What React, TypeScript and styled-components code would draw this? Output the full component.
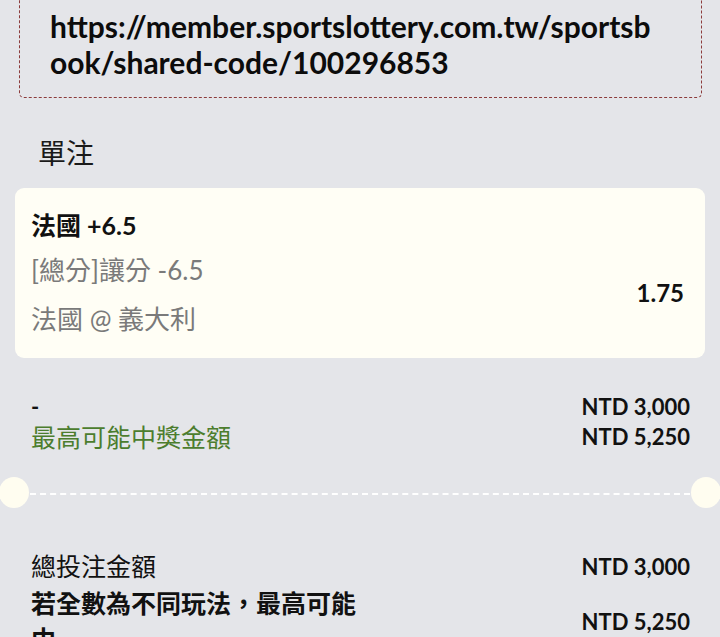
import { FC } from "react";
import styled, { createGlobalStyle } from "styled-components";

const GlobalStyle = createGlobalStyle`
  html, body {
    margin: 0;
    padding: 0;
    background: #e4e5e9;
    overflow: hidden;
  }
  body {
    font-family: Lato, "Noto Sans CJK TC", sans-serif;
    color: #111;
  }
`;

type Bet = {
  title: string;
  market: string;
  match: string;
  odds: string;
};

const bet: Bet = {
  title: "法國 +6.5",
  market: "[總分]讓分 -6.5",
  match: "法國 @ 義大利",
  odds: "1.75",
};

const App: FC = () => {
  return (
    <Page>
      <GlobalStyle />
      <LinkBox>https://member.sportslottery.com.tw/sportsbook/shared-code/100296853</LinkBox>
      <SectionTitle>單注</SectionTitle>
      <Card>
        <BetTitle>{bet.title}</BetTitle>
        <BetInfo>{bet.market}</BetInfo>
        <BetInfo $last>{bet.match}</BetInfo>
        <Odds>{bet.odds}</Odds>
      </Card>
      <Summary>
        <Label>-</Label>
        <Amount>NTD 3,000</Amount>
        <Label $green>最高可能中獎金額</Label>
        <Amount>NTD 5,250</Amount>
      </Summary>
      <Divider>
        <Hole $side="left" />
        <DashLine />
        <Hole $side="right" />
      </Divider>
      <Totals>
        <TotalLabel>總投注金額</TotalLabel>
        <TotalAmount>NTD 3,000</TotalAmount>
        <TotalLabel $bold>若全數為不同玩法，最高可能中</TotalLabel>
        <TotalAmount>NTD 5,250</TotalAmount>
      </Totals>
    </Page>
  );
};

export default App;

const Page = styled.div`
  display: flex;
  flex-direction: column;

  & > * {
    flex-shrink: 0;
  }
`;

const LinkBox = styled.div`
  margin: -12px 18px 0 19px;
  padding: 20px 38px 17px 30px;
  border: 1px dashed #8b3b3b;
  border-top: none;
  border-radius: 0 0 5px 5px;
  font-size: 30px;
  font-weight: 700;
  line-height: 36px;
  word-break: break-all;
  color: #0c0c0c;
`;

const SectionTitle = styled.div`
  margin: 38px 0 0 38px;
  font-size: 28px;
  line-height: 34px;
  color: #1a1a1a;
`;

const Card = styled.div`
  margin: 18px 15px 0 15px;
  height: 170px;
  box-sizing: border-box;
  padding: 20px 21px 0 16px;
  background: #fffef5;
  border-radius: 9px;
  display: grid;
  grid-template-columns: 1fr auto;
  grid-template-rows: 32px 44px 52px;
  align-items: center;
`;

const BetTitle = styled.div`
  grid-column: 1;
  font-size: 25px;
  font-weight: 700;
  color: #111;
`;

const BetInfo = styled.div<{ $last?: boolean }>`
  grid-column: 1;
  font-size: 26px;
  font-weight: 400;
  color: #7a7a7a;
  align-self: ${(p) => (p.$last ? "end" : "center")};
  margin-top: ${(p) => (p.$last ? "0" : "12px")};
`;

const Odds = styled.div`
  grid-column: 2;
  grid-row: 2 / 4;
  font-size: 24px;
  font-weight: 700;
  color: #111;
  margin-top: 8px;
`;

const Summary = styled.div`
  margin: 34px 30px 0 31px;
  display: grid;
  grid-template-columns: 1fr auto;
  line-height: 30px;
`;

const Label = styled.div<{ $green?: boolean }>`
  font-size: ${(p) => (p.$green ? "25px" : "22px")};
  font-weight: ${(p) => (p.$green ? 400 : 700)};
  color: ${(p) => (p.$green ? "#4c7d2e" : "#111")};
`;

const Amount = styled.div`
  font-size: 22px;
  font-weight: 700;
  text-align: right;
  color: #111;
`;

const Divider = styled.div`
  margin-top: 25px;
  display: flex;
  align-items: center;
  height: 31px;
`;

const Hole = styled.div<{ $side: "left" | "right" }>`
  flex: none;
  width: 30px;
  height: 31px;
  border-radius: 50%;
  background: #fffdf0;
  margin-left: ${(p) => (p.$side === "left" ? "-1px" : "0")};
  margin-right: ${(p) => (p.$side === "right" ? "-1px" : "0")};
`;

const DashLine = styled.div`
  flex: 1;
  height: 0;
  margin: 2px 1px 0 1px;
  border-top: 2px dashed #ffffff;
`;

const Totals = styled.div`
  margin: 39px 30px 0 31px;
  display: grid;
  grid-template-columns: 1fr auto;
  align-items: center;
`;

const TotalLabel = styled.div<{ $bold?: boolean }>`
  max-width: 335px;
  font-size: 25px;
  font-weight: ${(p) => (p.$bold ? 700 : 400)};
  line-height: ${(p) => (p.$bold ? "36px" : "38px")};
  color: #111;
`;

const TotalAmount = styled.div`
  font-size: 22px;
  font-weight: 700;
  text-align: right;
  color: #111;
`;
